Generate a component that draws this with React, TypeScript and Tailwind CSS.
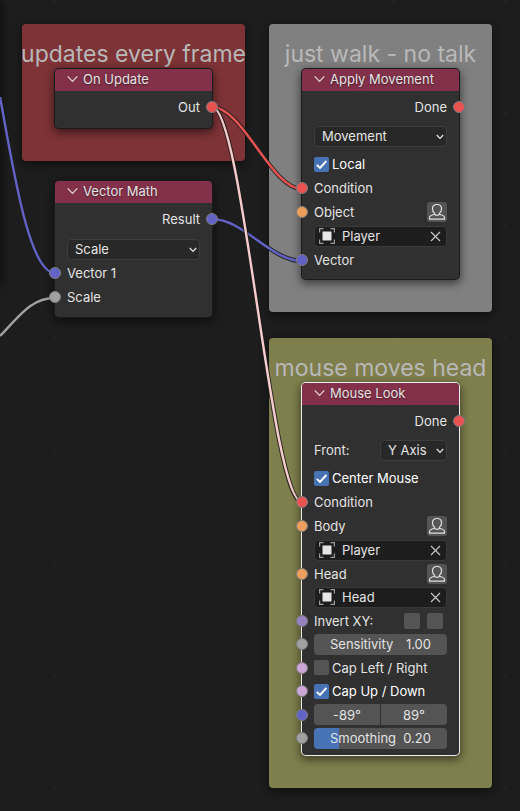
import { useId, useState, type ReactNode } from "react";

type SocketKind = "condition" | "vector" | "float" | "object" | "mixed" | "bool";

const socketColors: Record<SocketKind, string> = {
  condition: "bg-[#ea5252]",
  vector: "bg-[#6363c7]",
  float: "bg-[#a1a1a1]",
  object: "bg-[#ed9e5c]",
  mixed: "bg-[#9780c0]",
  bool: "bg-[#cca6d6]",
};

function Socket({ kind, side }: { kind: SocketKind; side: "in" | "out" }) {
  const edge = side === "in" ? "left-0 -translate-x-1/2" : "right-0 translate-x-1/2";
  return (
    <span
      className={`absolute top-1/2 size-3 -translate-y-1/2 rounded-full border border-[#7c7c7c] ${edge} ${socketColors[kind]}`}
    />
  );
}

function Row({
  children,
  input,
  output,
  compact = false,
  className = "",
}: {
  children: ReactNode;
  input?: SocketKind;
  output?: SocketKind;
  compact?: boolean;
  className?: string;
}) {
  return (
    <div className={`relative flex items-center px-3 ${compact ? "h-[23px]" : "h-6"} ${output ? "justify-end" : ""} ${className}`}>
      {input && <Socket kind={input} side="in" />}
      {children}
      {output && <Socket kind={output} side="out" />}
    </div>
  );
}

function Node({ title, selected = false, className = "", children }: { title: string; selected?: boolean; className?: string; children: ReactNode }) {
  return (
    <section
      className={`relative z-20 rounded bg-[#303030] ring-1 ${selected ? "ring-[#ededed]" : "ring-[#1b1b1b]"} shadow-[0_3px_9px_2px_rgba(0,0,0,0.5)] ${className}`}
    >
      <header className="mb-1 flex h-[22px] items-center gap-[5px] rounded-t bg-[#83314a] px-3 pb-0.5">
        <button type="button" aria-label={`Collapse ${title}`} className="flex">
          <svg width="11" height="8" viewBox="0 0 11 8" fill="none" stroke="#e0d0d5" strokeWidth="1.3">
            <path d="M0.7 1.4 5.5 6.4 10.3 1.4" />
          </svg>
        </button>
        <h3 className="whitespace-nowrap [text-shadow:0_1px_2px_rgba(0,0,0,0.5)]">{title}</h3>
      </header>
      {children}
    </section>
  );
}

function Frame({ title, className, children }: { title: string; className: string; children: ReactNode }) {
  return (
    <div className={`absolute w-[223px] rounded shadow-[0_3px_9px_1px_rgba(0,0,0,0.45)] ${className}`}>
      <h2 className="flex justify-center pt-[15px] text-[23px] leading-[30px] whitespace-nowrap text-[#b8b8b8]">{title}</h2>
      <div className="px-[33px] pb-[33px]">{children}</div>
    </div>
  );
}

function Dropdown({ label, options, className = "" }: { label: string; options: string[]; className?: string }) {
  return (
    <div className={`relative h-[21px] ${className}`}>
      <select
        aria-label={label}
        className="block size-full appearance-none rounded border border-[#3d3d3d] bg-[#282828] pr-4 pl-[7px] leading-4 text-[#e5e5e5] outline-none"
      >
        {options.map((option) => (
          <option key={option}>{option}</option>
        ))}
      </select>
      <svg className="pointer-events-none absolute top-2 right-[3px]" width="8" height="6" viewBox="0 0 8 6" fill="none" stroke="#e0e0e0" strokeWidth="1.3">
        <path d="M0.8 1 4 4.4 7.2 1" />
      </svg>
    </div>
  );
}

function Tick({ id, label, checked, onChange, size = "size-[15px]" }: { id?: string; label?: string; checked: boolean; onChange: () => void; size?: string }) {
  return (
    <span className={`relative flex shrink-0 ${size}`}>
      <input
        id={id}
        aria-label={label}
        type="checkbox"
        checked={checked}
        onChange={onChange}
        className="size-full appearance-none rounded-xs bg-[#545454] checked:bg-[#4772b3]"
      />
      {checked && (
        <svg className="pointer-events-none absolute inset-0 size-full" viewBox="0 0 15 15" fill="none" stroke="#fff" strokeWidth="1.9">
          <path d="M2.8 7.800 6 11 12.400 4" />
        </svg>
      )}
    </span>
  );
}

function Checkbox({ label, initial = false }: { label: string; initial?: boolean }) {
  const id = useId();
  const [checked, setChecked] = useState(initial);
  return (
    <div className="flex items-center gap-[3px]">
      <Tick id={id} checked={checked} onChange={() => setChecked(!checked)} />
      <label htmlFor={id} className={`whitespace-nowrap ${checked ? "text-white" : ""}`}>
        {label}
      </label>
    </div>
  );
}

function BareCheckbox({ label }: { label: string }) {
  const [checked, setChecked] = useState(false);
  return <Tick label={label} checked={checked} onChange={() => setChecked(!checked)} size="size-4" />;
}

function OwnerButton() {
  return (
    <button type="button" aria-label="Use owner" className="ml-auto flex size-5 items-center justify-center rounded-[3px] bg-[#545454]">
      <svg width="18" height="18" viewBox="0 0 18 18" fill="none" stroke="#e0e0e0" strokeWidth="1.2" strokeLinejoin="round">
        <path d="M6.600 11.500V10.200C5.200 9.400 4.500 8.300 4.500 6V5.500C4.500 3 6.200 1.500 9 1.500S13.500 3 13.500 5.500V6C13.500 8.300 12.800 9.400 11.400 10.200V11.500" />
        <path d="M6.600 11.300 3.600 12.200C2 12.700 1.500 13.300 1.500 14.600V16.200H16.500V14.600C16.500 13.300 16 12.700 14.400 12.200L11.400 11.300C10.800 12.700 7.200 12.700 6.600 11.300Z" />
      </svg>
    </button>
  );
}

function ObjectField({ label, value }: { label: string; value: string }) {
  const [text, setText] = useState(value);
  return (
    <div className="flex h-[21px] w-full items-center rounded border border-[#3a3a3a] bg-[#1d1d1d] pr-[5px] pl-1">
      <svg className="shrink-0" width="16" height="16" viewBox="0 0 16 16" fill="none">
        <rect x="3.500" y="3.500" width="9" height="9" fill="#e6e6e6" />
        <path d="M0.600 4.500V0.600H4.500M11.500 0.600H15.400V4.500M15.400 11.500V15.400H11.500M4.500 15.400H0.600V11.500" stroke="#9a9a9a" strokeWidth="1.200" />
      </svg>
      <input
        type="text"
        aria-label={label}
        value={text}
        onChange={(event) => setText(event.target.value)}
        className="ml-[7px] w-0 min-w-0 flex-1 bg-transparent leading-4 outline-none"
      />
      <button type="button" aria-label={`Clear ${label}`} onClick={() => setText("")} className="flex">
        <svg width="11" height="11" viewBox="0 0 11 11" stroke="#c4c4c4" strokeWidth="1.200">
          <path d="M1 1 10 10M10 1 1 10" />
        </svg>
      </button>
    </div>
  );
}

function NumberField({ label, value, fill = 0 }: { label: string; value: string; fill?: number }) {
  const id = useId();
  return (
    <div className="relative flex h-[21px] w-full items-center justify-between overflow-hidden rounded bg-[#545454] px-4">
      <span className="absolute inset-y-0 left-0 bg-[#4772b3]" style={{ width: `${fill * 100}%` }} />
      <label htmlFor={id} className="relative">
        {label}
      </label>
      <input id={id} type="text" defaultValue={value} className="relative w-8 bg-transparent text-right leading-4 outline-none" />
    </div>
  );
}

function Wire({ d, color, width = 2.4 }: { d: string; color: string; width?: number }) {
  return (
    <g fill="none">
      <path d={d} stroke="#1c1c1c" strokeOpacity="0.85" strokeWidth={width + 2} />
      <path d={d} stroke={color} strokeWidth={width} />
    </g>
  );
}

export default function App() {
  return (
    <main className="relative min-h-screen overflow-hidden bg-[#1d1d1d] font-['Inter','Liberation_Sans',sans-serif] text-[13px] leading-4 text-[#e3e3e3]">
      <svg className="absolute inset-0 size-full" aria-hidden="true">
        <defs>
          <pattern id="grid" x="54" y="0" width="225" height="225" patternUnits="userSpaceOnUse">
            <path d="M0 0h2v2H0zM113 0h2v2h-2zM0 112h2v2H0zM113 112h2v2h-2z" fill="#252525" />
          </pattern>
        </defs>
        <rect width="100%" height="100%" fill="url(#grid)" />
      </svg>
      <div className="absolute top-0 -left-5 h-[280px] w-5 shadow-[0_3px_9px_2px_rgba(0,0,0,0.5)]" />

      <Frame title="updates every frame" className="top-6 left-[22px] bg-[#7e3336]">
        <Node title="On Update" className="pb-[9px]">
          <Row output="condition">Out</Row>
        </Node>
      </Frame>

      <Frame title="just walk - no talk" className="top-6 left-[269px] bg-[#808080]">
        <Node title="Apply Movement" className="pb-[7px]">
          <Row output="condition">Done</Row>
          <Row className="mt-[5px] mb-1">
            <Dropdown label="Movement type" options={["Movement", "Rotation"]} className="w-full" />
          </Row>
          <Row>
            <Checkbox label="Local" initial />
          </Row>
          <Row input="condition">Condition</Row>
          <Row input="object">
            Object
            <OwnerButton />
          </Row>
          <Row>
            <ObjectField label="Object" value="Player" />
          </Row>
          <Row input="vector">Vector</Row>
        </Node>
      </Frame>

      <Frame title="mouse moves head" className="top-[338px] left-[269px] bg-[#7e7f4c]">
        <Node title="Mouse Look" selected className="pb-[5px]">
          <Row output="condition">Done</Row>
          <Row className="mt-[5px] mb-1 justify-between">
            Front:
            <Dropdown label="Front axis" options={["Y Axis", "X Axis"]} className="w-[67px]" />
          </Row>
          <Row>
            <Checkbox label="Center Mouse" initial />
          </Row>
          <Row input="condition">Condition</Row>
          <Row input="object">
            Body
            <OwnerButton />
          </Row>
          <Row>
            <ObjectField label="Body" value="Player" />
          </Row>
          <Row input="object" compact>
            Head
            <OwnerButton />
          </Row>
          <Row>
            <ObjectField label="Head" value="Head" />
          </Row>
          <Row input="mixed" compact>
            Invert XY:
            <div className="mr-1 ml-auto flex gap-[7px]">
              <BareCheckbox label="Invert X" />
              <BareCheckbox label="Invert Y" />
            </div>
          </Row>
          <Row input="float">
            <NumberField label="Sensitivity" value="1.00" />
          </Row>
          <Row input="bool" compact>
            <Checkbox label="Cap Left / Right" />
          </Row>
          <Row input="bool">
            <Checkbox label="Cap Up / Down" initial />
          </Row>
          <Row input="vector" compact>
            <div className="flex h-[21px] w-full gap-px overflow-hidden rounded">
              <input type="text" aria-label="Lower limit" defaultValue="-89°" className="w-0 flex-1 bg-[#545454] text-center outline-none" />
              <input type="text" aria-label="Upper limit" defaultValue="89°" className="w-0 flex-1 bg-[#545454] text-center outline-none" />
            </div>
          </Row>
          <Row input="float">
            <NumberField label="Smoothing" value="0.20" fill={0.19} />
          </Row>
        </Node>
      </Frame>

      <div className="absolute top-[181px] left-[55px] z-20 w-[157px]">
        <Node title="Vector Math" className="pb-2">
          <Row output="vector">Result</Row>
          <Row className="mt-1.5">
            <Dropdown label="Operation" options={["Scale", "Add", "Subtract"]} className="w-full" />
          </Row>
          <Row input="vector">Vector 1</Row>
          <Row input="float">Scale</Row>
        </Node>
      </div>

      <svg className="pointer-events-none absolute inset-0 z-10 size-full" aria-hidden="true">
        <Wire d="M0 97C12 160 28 273 55 273" color="#6363c7" />
        <Wire d="M0 336C18 318 30 298 55 298" color="#a1a1a1" />
        <Wire d="M212 219C243 219 271 261 302 261" color="#6363c7" />
        <Wire d="M212 107C243 107 271 189 302 189" color="#ea5252" />
        <Wire d="M212 107C243 107 271 502 302 502" color="#f7cccc" />
      </svg>
    </main>
  );
}
